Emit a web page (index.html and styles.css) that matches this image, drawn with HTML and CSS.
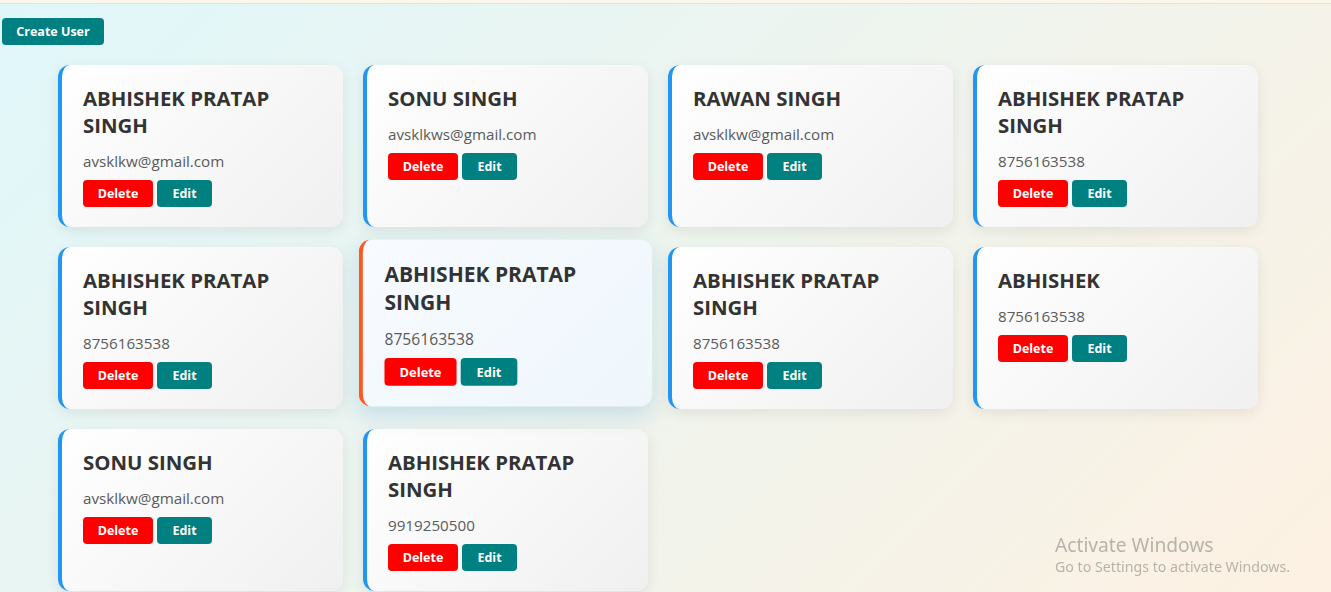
FILE: index.html
```html
<!DOCTYPE html>
<html>
<head>
<meta charset="utf-8">
<link rel="stylesheet" href="styles.css">
</head>
<body>
<div class="topstrip"></div>
<div class="page">
  <button class="btn create">Create User</button>
  <div class="grid">
    <div class="card"><h3>ABHISHEK PRATAP SINGH</h3><p>avsklkw@gmail.com</p><div class="actions"><button class="btn del">Delete</button><button class="btn edit">Edit</button></div></div>
    <div class="card"><h3>SONU SINGH</h3><p>avsklkws@gmail.com</p><div class="actions"><button class="btn del">Delete</button><button class="btn edit">Edit</button></div></div>
    <div class="card"><h3>RAWAN SINGH</h3><p>avsklkw@gmail.com</p><div class="actions"><button class="btn del">Delete</button><button class="btn edit">Edit</button></div></div>
    <div class="card"><h3>ABHISHEK PRATAP SINGH</h3><p>8756163538</p><div class="actions"><button class="btn del">Delete</button><button class="btn edit">Edit</button></div></div>
    <div class="card"><h3>ABHISHEK PRATAP SINGH</h3><p>8756163538</p><div class="actions"><button class="btn del">Delete</button><button class="btn edit">Edit</button></div></div>
    <div class="card hovered"><h3>ABHISHEK PRATAP SINGH</h3><p>8756163538</p><div class="actions"><button class="btn del">Delete</button><button class="btn edit">Edit</button></div></div>
    <div class="card"><h3>ABHISHEK PRATAP SINGH</h3><p>8756163538</p><div class="actions"><button class="btn del">Delete</button><button class="btn edit">Edit</button></div></div>
    <div class="card"><h3>ABHISHEK</h3><p>8756163538</p><div class="actions"><button class="btn del">Delete</button><button class="btn edit">Edit</button></div></div>
    <div class="card"><h3>SONU SINGH</h3><p>avsklkw@gmail.com</p><div class="actions"><button class="btn del">Delete</button><button class="btn edit">Edit</button></div></div>
    <div class="card"><h3>ABHISHEK PRATAP SINGH</h3><p>9919250500</p><div class="actions"><button class="btn del">Delete</button><button class="btn edit">Edit</button></div></div>
  </div>
</div>
<div class="activate">
  <div class="act-title">Activate Windows</div>
  <div class="act-sub">Go to Settings to activate Windows.</div>
</div>
</body>
</html>
```
FILE: styles.css
```css
html, body {
  margin: 0;
  height: 100%;
  overflow: hidden;
}
body {
  font-family: "Open Sans", "Noto Sans", sans-serif;
  background: linear-gradient(135deg, #e0f7fa 0%, #fdf1e2 100%);
}
.topstrip {
  height: 3px;
  background: #fbf7ea;
  border-bottom: 1px solid #e6e3d5;
}
.page {
  padding: 14px 0 0 2px;
}
.btn {
  font-family: "Open Sans", "Noto Sans", sans-serif;
  font-weight: 700;
  font-size: 12.5px;
  color: #fff;
  border: none;
  border-radius: 4px;
  height: 27px;
  padding: 0 14px;
  cursor: pointer;
}
.create {
  background: #008080;
  width: 102px;
  padding: 0;
  display: block;
}
.grid {
  margin: 20px 0 0 56px;
  display: grid;
  grid-template-columns: repeat(4, 285px);
  gap: 20px;
}
.card {
  background: linear-gradient(135deg, #ffffff 0%, #f0f0f0 100%);
  border-left: 4px solid #2196f3;
  border-radius: 12px;
  padding: 20px 20px 20px 21px;
  box-shadow: 0 4px 14px rgba(0, 0, 0, 0.08);
}
.card h3 {
  margin: 0 0 11px;
  font-size: 20.4px;
  line-height: 27px;
  font-weight: 700;
  color: #333;
}
.card p {
  margin: 0 0 8px;
  font-size: 15.2px;
  line-height: 22px;
  color: #5a5a5a;
}
.actions {
  display: flex;
  gap: 4px;
}
.del { background: #ff0000; width: 70px; padding: 0; }
.edit { background: #008080; width: 55px; padding: 0; }
.card.hovered {
  transform: translateY(-5px) scale(1.03);
  border-left-color: #ff5722;
  background: linear-gradient(135deg, #f8fbff 0%, #eef6fc 100%);
  box-shadow: 0 8px 22px rgba(90, 160, 210, 0.28);
}
.activate {
  position: fixed;
  left: 1055px;
  top: 534px;
  color: #b7b3aa;
  font-family: "Noto Sans", "Open Sans", sans-serif;
}
.act-title {
  font-size: 19.2px;
  line-height: 22px;
}
.act-sub {
  font-size: 14.2px;
  line-height: 21px;
}
```
